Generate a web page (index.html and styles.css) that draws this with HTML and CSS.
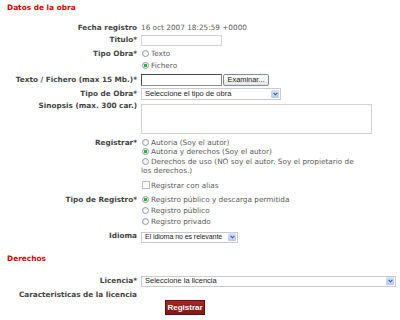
FILE: index.html
```html
<!DOCTYPE html>
<html lang="es">
<head>
<meta charset="utf-8">
<title>Datos de la obra</title>
<link rel="stylesheet" href="styles.css">
</head>
<body>
<div class="page">
  <h2 class="section sec-datos">Datos de la obra</h2>

  <div class="row r-fecha">
    <div class="lbl">Fecha registro</div>
    <div class="val">16 oct 2007 18:25:59 +0000</div>
  </div>

  <div class="row r-titulo">
    <div class="lbl">Titulo*</div>
    <div class="val"><input class="txt" type="text"></div>
  </div>

  <div class="row r-tipo">
    <div class="lbl">Tipo Obra*</div>
    <div class="val">
      <div><input class="radio" type="radio" name="tipo">Texto</div>
      <div><input class="radio" type="radio" name="tipo" checked>Fichero</div>
    </div>
  </div>

  <div class="row r-fichero">
    <div class="lbl">Texto / Fichero (max 15 Mb.)*</div>
    <div class="val file"><input class="txt dark" type="text"><button class="browse" type="button">Examinar...</button></div>
  </div>

  <div class="row r-tipoobra">
    <div class="lbl">Tipo de Obra*</div>
    <div class="val">
      <div class="sel w-tipo"><span class="sel-text">Seleccione el tipo de obra</span><span class="arrow"><svg width="5" height="4" viewBox="0 0 5 4"><path d="M0.6 0.8 L2.5 2.8 L4.4 0.8" fill="none" stroke="#3f5a8a" stroke-width="1.1"/></svg></span></div>
    </div>
  </div>

  <div class="row r-sinopsis">
    <div class="lbl">Sinopsis (max. 300 car.)</div>
    <div class="val"><textarea class="area"></textarea></div>
  </div>

  <div class="row r-reg">
    <div class="lbl">Registrar*</div>
    <div class="val">
      <div class="lines">
        <input class="radio" type="radio" name="reg">Autoria (Soy el autor)<br>
        <input class="radio" type="radio" name="reg" checked>Autoria y derechos (Soy el autor)<br>
        <input class="radio" type="radio" name="reg">Derechos de uso (NO soy el autor. Soy el propietario de<br>los derechos.)
      </div>
      <div class="alias"><input class="check" type="checkbox">Registrar con alias</div>
    </div>
  </div>

  <div class="row r-tiporeg">
    <div class="lbl">Tipo de Registro*</div>
    <div class="val">
      <div><input class="radio" type="radio" name="treg" checked>Registro público y descarga permitida</div>
      <div><input class="radio" type="radio" name="treg">Registro público</div>
      <div><input class="radio" type="radio" name="treg">Registro privado</div>
    </div>
  </div>

  <div class="row r-idioma">
    <div class="lbl">Idioma</div>
    <div class="val">
      <div class="sel w-idioma"><span class="sel-text">El idioma no es relevante</span><span class="arrow"><svg width="5" height="4" viewBox="0 0 5 4"><path d="M0.6 0.8 L2.5 2.8 L4.4 0.8" fill="none" stroke="#3f5a8a" stroke-width="1.1"/></svg></span></div>
    </div>
  </div>

  <h2 class="section sec-derechos">Derechos</h2>

  <div class="row r-licencia">
    <div class="lbl">Licencia*</div>
    <div class="val">
      <div class="sel w-licencia"><span class="sel-text">Seleccione la licencia</span><span class="arrow"><svg width="5" height="4" viewBox="0 0 5 4"><path d="M0.6 0.8 L2.5 2.8 L4.4 0.8" fill="none" stroke="#3f5a8a" stroke-width="1.1"/></svg></span></div>
    </div>
  </div>

  <div class="row r-caract">
    <div class="lbl">Caracteristicas de la licencia</div>
    <div class="val"></div>
  </div>

  <div class="actions"><button class="submit" type="button">Registrar</button></div>
</div>
</body>
</html>
```

FILE: styles.css
```css
html, body {
  margin: 0;
  padding: 0;
  background: #fff;
}

body {
  font-family: "DejaVu Sans", Verdana, sans-serif;
  font-size: 7.3px;
  color: #5a5a5a;
}

.page {
  padding-left: 7px;
  width: 393px;
}

.section {
  margin: 0;
  font-size: 7.4px;
  line-height: 9px;
  font-weight: bold;
  color: #e00000;
}

.sec-datos { padding-top: 3px; }
.sec-derechos { margin-top: 11.5px; }

.row {
  display: flex;
  gap: 4px;
  align-items: flex-start;
}

.lbl {
  width: 130px;
  flex: none;
  text-align: right;
  font-weight: bold;
  color: #444;
  line-height: 12px;
  white-space: nowrap;
}

.val {
  line-height: 12px;
  white-space: nowrap;
}

/* vertical rhythm */
.r-fecha { margin-top: 10px; }
.r-titulo .txt { margin-top: 1px; }
.r-tipo { margin-top: 2px; }
.r-fichero { margin-top: 2px; }
.r-tipoobra { margin-top: 2px; }
.r-sinopsis { margin-top: 2px; }
.r-sinopsis .lbl { line-height: 8px; }
.r-reg { margin-top: 2px; padding-top: 1.5px; }
.r-reg .lbl, .r-reg .lines { line-height: 9.6px; }
.alias { margin-top: 4px; line-height: 12px; }
.r-tiporeg { margin-top: 2px; }
.r-tiporeg .val { line-height: 11.3px; }
.r-tiporeg .lbl { line-height: 11.3px; }
.r-idioma { margin-top: 2px; }
.r-idioma .sel { margin-top: 2px; height: 11px; }
.r-licencia { margin-top: 11.5px; }
.r-licencia .sel { margin-top: 1px; height: 11px; }
.r-caract { margin-top: 3px; }
.r-caract .lbl { line-height: 10px; }

/* controls */
.txt {
  box-sizing: border-box;
  width: 81px;
  height: 11px;
  margin: 0;
  padding: 0;
  border: 1px solid #cfd2d6;
  background: #fff;
  vertical-align: top;
}

.txt.dark {
  height: 12px;
  border: 1px solid #8a8a8a;
  border-top-color: #4a4a4a;
  border-left-color: #4a4a4a;
}

.file {
  display: flex;
  align-items: flex-start;
}

.browse {
  box-sizing: border-box;
  width: 46px;
  height: 12px;
  margin: 0 0 0 1px;
  padding: 0;
  border: 1px solid #7a8ca6;
  border-radius: 2px;
  background: linear-gradient(#ffffff, #e6e6e0);
  font-family: "Liberation Sans", Arial, sans-serif;
  font-size: 7.4px;
  line-height: 10px;
  color: #222;
}

.radio {
  appearance: none;
  -webkit-appearance: none;
  box-sizing: border-box;
  width: 7px;
  height: 7px;
  margin: 0 2px 0 1px;
  padding: 0;
  border: 1px solid #8f9cb0;
  border-radius: 50%;
  background: radial-gradient(circle at 60% 60%, #ffffff 0, #f2f2f2 50%, #d9dde3 100%);
  vertical-align: middle;
  position: relative;
  top: -0.5px;
}

.radio:checked {
  background: radial-gradient(circle, #3cc43c 0, #22a022 1.3px, #f4f4f4 1.9px, #dde1e6 100%);
}

.check {
  appearance: none;
  -webkit-appearance: none;
  box-sizing: border-box;
  width: 8px;
  height: 8px;
  margin: 0 1px 0 1px;
  padding: 0;
  border: 1px solid #bdbdbd;
  background: #fafafa;
  vertical-align: middle;
  position: relative;
  top: -0.5px;
}

.area {
  display: block;
  box-sizing: border-box;
  width: 231px;
  height: 30px;
  margin: 2px 0 0 0;
  padding: 0;
  border: 1px solid #cfd2d6;
  resize: none;
  background: #fff;
}

.sel {
  box-sizing: border-box;
  display: flex;
  align-items: center;
  height: 12px;
  border: 1px solid #c8ccd2;
  background: #fff;
  font-family: "Liberation Sans", Arial, sans-serif;
  font-size: 7.5px;
  color: #1e1e1e;
  padding-left: 3px;
}

.sel-text {
  flex: 1;
  min-width: 0;
  overflow: hidden;
  line-height: 10px;
}

.w-idioma .sel-text {
  font-size: 7.1px;
  letter-spacing: -0.1px;
}

.arrow {
  display: flex;
  flex: none;
  align-items: center;
  justify-content: center;
  width: 8px;
  height: 8px;
  margin-left: 1px;
  margin-right: 1px;
  background: linear-gradient(#d6e2fb, #b7c9f2);
  border-radius: 1px;
}

.w-tipo { width: 140px; }
.w-idioma { width: 97px; }
.w-licencia { width: 255px; }

.actions {
  padding-left: 158px;
}

.submit {
  box-sizing: border-box;
  width: 40px;
  height: 15px;
  margin: 0;
  padding: 0;
  border: 1px solid #6a0f0f;
  background: linear-gradient(#a02828, #841717);
  color: #fff;
  font-family: "Liberation Sans", Arial, sans-serif;
  font-weight: bold;
  font-size: 8px;
  line-height: 13px;
}
```
